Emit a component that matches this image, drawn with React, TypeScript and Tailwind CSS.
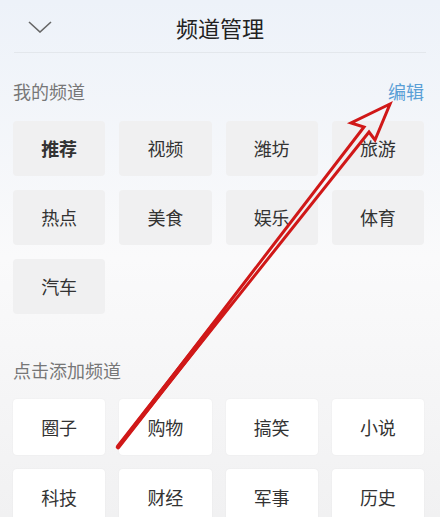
import React from 'react';

const myChannels = ['推荐', '视频', '潍坊', '旅游', '热点', '美食', '娱乐', '体育', '汽车'];
const moreChannels = ['圈子', '购物', '搞笑', '小说', '科技', '财经', '军事', '历史'];

const font = { fontFamily: '"Noto Sans CJK SC", "Noto Sans", sans-serif' };

const App = () => {
  return (
    <div
      className="relative w-[440px] h-[517px] overflow-hidden bg-gradient-to-b from-[#edf2f9] via-[#fafafb] to-[#f1f1f2]"
      style={font}
    >
      {/* header */}
      <div className="grid grid-cols-[100px_1fr_100px] items-center h-[52px]">
        <div className="pl-[28px] pt-[2px]">
          <svg width="24" height="12" viewBox="0 0 24 12" fill="none">
            <path d="M1 1l11 10L23 1" stroke="#666" strokeWidth="1.6" />
          </svg>
        </div>
        <div className="text-center text-[22px] text-[#222] leading-none pt-[2px]">频道管理</div>
        <div />
      </div>
      <div className="mx-[14px] border-b border-[#e3e7ec]" />

      {/* my channels */}
      <div className="flex justify-between items-center pl-[13px] pr-[16px] mt-[27px] h-[22px]">
        <span className="text-[18px] text-[#777]">我的频道</span>
        <span className="text-[18px] text-[#5a9fd6]">编辑</span>
      </div>
      <div className="grid grid-cols-4 gap-[14px] pl-[13px] pr-[16px] mt-[19px]">
        {myChannels.map((c, i) => (
          <div
            key={c}
            className={`h-[55px] rounded-[4px] bg-[#f0f0f1] flex items-center justify-center text-[18px] text-[#333] ${
              i === 0 ? 'font-bold' : ''
            }`}
          >
            {c}
          </div>
        ))}
      </div>

      {/* add channels */}
      <div className="pl-[13px] mt-[45px] h-[22px] flex items-center">
        <span className="text-[18px] text-[#777]">点击添加频道</span>
      </div>
      <div className="grid grid-cols-4 gap-[14px] pl-[13px] pr-[16px] mt-[18px]">
        {moreChannels.map((c) => (
          <div
            key={c}
            className="h-[56px] rounded-[4px] bg-white shadow-[0_0_2px_rgba(0,0,0,0.06)] flex items-center justify-center text-[18px] text-[#333]"
          >
            {c}
          </div>
        ))}
      </div>

      {/* red annotation arrow */}
      <svg className="absolute inset-0 pointer-events-none" width="440" height="517" viewBox="0 0 440 517">
        <path
          d="M118 447 L364 127 L351 123 L390 104 L375 140 L369 132 L118 447"
          fill="none"
          stroke="#d01818"
          strokeWidth="3"
          strokeLinejoin="miter"
        />
        <path d="M118 447 L215 323" stroke="#d01818" strokeWidth="4.5" strokeLinecap="round" />
      </svg>
    </div>
  );
};

export default App;
